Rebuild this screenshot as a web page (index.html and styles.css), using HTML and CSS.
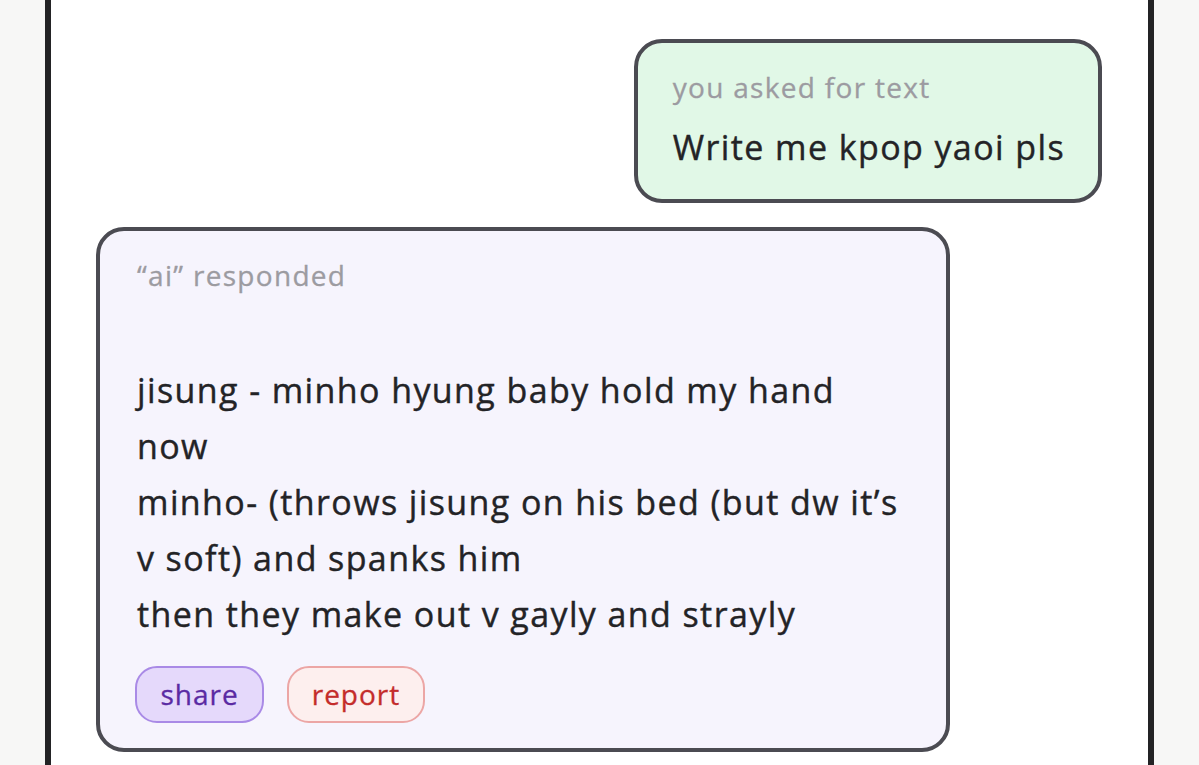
FILE: index.html
```html
<!DOCTYPE html>
<html lang="en">
<head>
<meta charset="utf-8">
<title>chat</title>
<link rel="stylesheet" href="styles.css">
</head>
<body>
<div class="page">
  <div class="panel">
    <div class="msg msg-user">
      <div class="label">you asked for text</div>
      <div class="text">Write me kpop yaoi pls</div>
    </div>
    <div class="msg msg-ai">
      <div class="label">“ai” responded</div>
      <div class="text body">jisung - minho hyung baby hold my hand now<br>minho- (throws jisung on his bed (but dw it’s v soft) and spanks him<br>then they make out v gayly and strayly</div>
      <div class="actions">
        <button class="btn btn-share">share</button>
        <button class="btn btn-report">report</button>
      </div>
    </div>
  </div>
</div>
</body>
</html>
```
FILE: styles.css
```css
html, body {
  margin: 0;
  padding: 0;
  background: #f7f7f6;
  font-family: "Open Sans", "Noto Sans", sans-serif;
}
.page {
  padding: 0 45px;
  height: 765px;
  overflow: hidden;
}
.panel {
  background: #ffffff;
  border-left: 6px solid #232325;
  border-right: 6px solid #232325;
  min-height: 765px;
  padding: 39px 46px 0 45px;
  display: flex;
  flex-direction: column;
  gap: 24px;
  box-sizing: border-box;
}
.msg {
  border: 4px solid #4b4b52;
  border-radius: 28px;
  box-sizing: border-box;
}
.msg-user {
  align-self: flex-end;
  background: #e1f8e7;
  padding: 24px 33px 24px 33px;
}
.msg-ai {
  align-self: flex-start;
  width: 854px;
  background: #f6f4fd;
  padding: 24px 40px 25px 35px;
}
.label {
  color: #9c9ba1;
  font-size: 28px;
  letter-spacing: 1.3px;
  line-height: 40px;
  padding-left: 2px;
  -webkit-text-stroke: 0.3px currentColor;
}
.text {
  color: #232326;
  font-size: 34px;
  letter-spacing: 1.4px;
  line-height: 56px;
  margin-top: 12px;
  padding-left: 2px;
  -webkit-text-stroke: 0.4px currentColor;
}
.body {
  margin-top: 67px;
}
.actions {
  display: flex;
  gap: 23px;
  margin-top: 24px;
}
.btn {
  font-family: inherit;
  font-size: 28px;
  letter-spacing: 1px;
  line-height: 53px;
  height: 57px;
  padding: 0;
  border-radius: 22px;
  border: 2px solid;
  box-sizing: border-box;
  -webkit-text-stroke: 0.3px currentColor;
}
.btn-share {
  background: #e5d9fb;
  border-color: #a98ae6;
  color: #5a2aa3;
  width: 129px;
}
.btn-report {
  background: #fdefee;
  border-color: #eca6a5;
  color: #c42c2b;
  width: 138px;
}
```
